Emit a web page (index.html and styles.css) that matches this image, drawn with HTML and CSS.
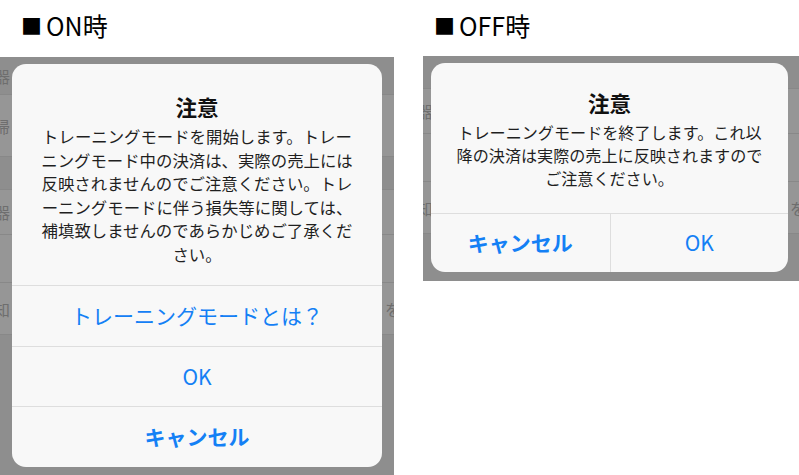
FILE: index.html
```html
<!DOCTYPE html>
<html lang="ja">
<head>
<meta charset="utf-8">
<title>トレーニングモード</title>
<link rel="stylesheet" href="styles.css">
</head>
<body>
<div class="page">
  <section class="col col-on">
    <h2 class="label label-on"><span class="sq">■</span>ON時</h2>
    <div class="screen screen-on">
      <div class="bg-list">
        <div class="bg-row r1"><span class="bg-l">機器</span></div>
        <div class="bg-row r2 light"><span class="bg-l">返帰</span></div>
        <div class="bg-row r3"></div>
        <div class="bg-row r4 light"><span class="bg-l">機器</span></div>
        <div class="bg-row r5 light"><span class="bg-l">リ</span></div>
        <div class="bg-row r6 light"><span class="bg-l">通知</span><span class="bg-r">を</span></div>
        <div class="bg-row r7"></div>
      </div>
      <div class="alert alert-on">
        <div class="alert-body">
          <div class="alert-title">注意</div>
          <p class="alert-msg">トレーニングモードを開始します。トレー<br>ニングモード中の決済は、実際の売上には<br>反映されませんのでご注意ください。トレ<br>ーニングモードに伴う損失等に関しては、<br>補填致しませんのであらかじめご了承くだ<br>さい。</p>
        </div>
        <div class="actions actions-stack">
          <div class="btn">トレーニングモードとは？</div>
          <div class="btn">OK</div>
          <div class="btn btn-bold">キャンセル</div>
        </div>
      </div>
    </div>
  </section>
  <section class="col col-off">
    <h2 class="label label-off"><span class="sq">■</span>OFF時</h2>
    <div class="screen screen-off">
      <div class="bg-list bg-list-off">
        <div class="bg-row r1"><span class="bg-l">機器</span></div>
        <div class="bg-row r2 light"><span class="bg-l">返帰</span></div>
        <div class="bg-row r3"></div>
        <div class="bg-row r4 light"><span class="bg-l">機器</span></div>
        <div class="bg-row r5 light"><span class="bg-l">リ</span></div>
        <div class="bg-row r6 light"><span class="bg-l">通知</span><span class="bg-r">を</span></div>
        <div class="bg-row r7"></div>
      </div>
      <div class="alert alert-off">
        <div class="alert-body">
          <div class="alert-title">注意</div>
          <p class="alert-msg">トレーニングモードを終了します。これ以<br>降の決済は実際の売上に反映されますので<br>ご注意ください。</p>
        </div>
        <div class="actions actions-row">
          <div class="btn btn-bold">キャンセル</div>
          <div class="btn">OK</div>
        </div>
      </div>
    </div>
  </section>
</div>
</body>
</html>
```

FILE: styles.css
```css
* { box-sizing: border-box; }

html, body {
  margin: 0;
  padding: 0;
  background: #ffffff;
}

body {
  width: 799px;
  height: 475px;
  overflow: hidden;
  font-family: "Noto Sans CJK JP", "Noto Sans", sans-serif;
}

.page {
  display: flex;
  height: 475px;
}

.col-on {
  width: 394px;
  display: flex;
  flex-direction: column;
}

.col-off {
  flex: 1;
  margin-left: 29px;
  display: flex;
  flex-direction: column;
}

.label {
  margin: 0;
  display: flex;
  align-items: center;
  font-family: "Noto Sans CJK JP", sans-serif;
  font-weight: normal;
  font-size: 25px;
  line-height: 48px;
  color: #000;
  white-space: nowrap;
}

.sq {
  font-size: 21px;
  margin-right: 4px;
}

.label-on {
  height: 50px;
  margin-bottom: 7px;
  padding-left: 21px;
}

.label-off {
  height: 50px;
  margin-bottom: 6px;
  padding-left: 11px;
}

.screen {
  position: relative;
  background: #8f8f8f;
  overflow: hidden;
}

.screen-on { height: 418px; }
.screen-off { height: 225px; }

/* underlying app screen seen through the dim overlay */
.bg-list {
  display: flex;
  flex-direction: column;
}

.bg-list-off { margin-top: -100px; }

.bg-row {
  display: flex;
  align-items: center;
  justify-content: space-between;
  background: #8e8e8e;
  border-bottom: 1px solid #888888;
  color: #6e6e6e;
  font-size: 16px;
}

.bg-row.light { background: #969696; }

.r1 { height: 38px; }
.r2 { height: 62px; }
.r3 { height: 33px; }
.r4 { height: 45px; }
.r5 { height: 48px; }
.r6 { height: 52px; }
.r7 { height: 300px; border-bottom: none; }

.bg-l {
  margin-left: -22px;
  white-space: nowrap;
}

.bg-r {
  margin-right: -7px;
}

/* alert dialog lying over the screen */
.alert {
  position: absolute;
  background: #f8f8f8;
  border-radius: 14px;
  overflow: hidden;
  display: flex;
  flex-direction: column;
}

.alert-on {
  left: 12px;
  top: 7px;
  width: 370px;
}

.alert-off {
  left: 8px;
  top: 7px;
  width: 357px;
}

.alert-body {
  text-align: center;
  white-space: nowrap;
}

.alert-on .alert-body { padding: 29px 8px 19px; }
.alert-off .alert-body { padding: 26px 8px 23px; }

.alert-title {
  font-size: 21.5px;
  font-weight: bold;
  line-height: 28px;
  color: #111111;
}

.alert-msg {
  margin: 4px 0 0;
  color: #1f1f1f;
}

.alert-on .alert-msg {
  font-size: 16.4px;
  line-height: 23.5px;
}

.alert-off .alert-msg {
  font-size: 16.1px;
  line-height: 23px;
}

.actions-stack {
  display: flex;
  flex-direction: column;
}

.actions-row {
  display: grid;
  grid-template-columns: 1fr 1fr;
  border-top: 1px solid #dedede;
}

.btn {
  display: flex;
  align-items: center;
  justify-content: center;
  color: #1480f5;
  font-size: 21px;
  white-space: nowrap;
  padding-bottom: 2px;
}

.actions-stack .btn {
  height: 61px;
  border-top: 1px solid #dedede;
}

.actions-stack .btn:nth-child(2) {
  height: 60px;
}

.actions-row .btn {
  height: 58px;
}

.actions-row .btn + .btn {
  border-left: 1px solid #dedede;
}

.btn-bold { font-weight: bold; }
```
